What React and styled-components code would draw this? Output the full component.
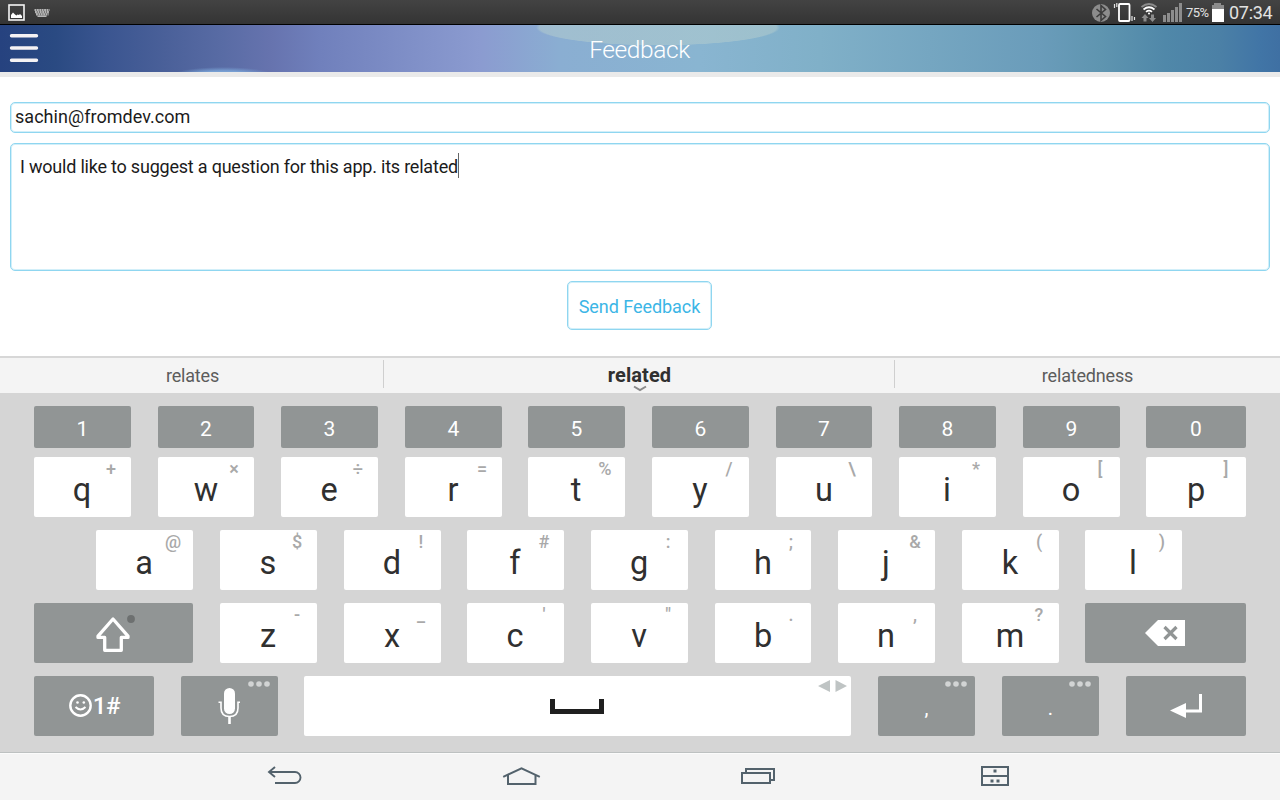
import React from "react";
import styled, { createGlobalStyle, css } from "styled-components";

const GlobalStyle = createGlobalStyle`
  * { box-sizing: border-box; }
  body { margin: 0; background: #fff; font-family: Roboto, "Liberation Sans", sans-serif; overflow: hidden; }
`;

const Screen = styled.div`
  width: 1280px;
  height: 800px;
  display: flex;
  flex-direction: column;
  background: #fff;
`;

const StatusBar = styled.div`
  height: 25px;
  flex: none;
  display: flex;
  justify-content: space-between;
  background: linear-gradient(#434343, #343434);
  border-bottom: 1px solid #000;
`;

const StatusGroup = styled.div`
  display: flex;
  height: 24px;
`;

const StatusText = styled.span`
  width: ${(p) => p.$width}px;
  margin-left: ${(p) => p.$gap}px;
  font-size: ${(p) => p.$size}px;
  letter-spacing: ${(p) => p.$spacing}px;
  line-height: 26px;
  color: #e2e2e2;
  white-space: nowrap;
`;

const Glyph = styled.svg`
  display: block;
  flex: none;
`;

const Header = styled.header`
  height: 52px;
  flex: none;
  display: grid;
  grid-template-columns: 48px 1fr 48px;
  border-bottom: 5px solid #eaeaea;
  background:
    radial-gradient(ellipse 122px 18px at 658px 2.5px, rgba(182, 206, 206, 0.5) 97%, transparent 100%),
    radial-gradient(ellipse 52px 9px at 223px 51px, rgba(125, 168, 218, 0.85) 55%, transparent 100%),
    linear-gradient(90deg, #26427f 0, #2a4a82 55px, #3a5590 105px, #4a6099 165px, #586ba4 220px, #6673ae 270px,
      #7080bc 320px, #8b9bd0 480px, #8aaed2 560px, #89b5d1 700px, #80b0c8 820px, #6a9cba 1040px, #5f95b0 1100px,
      #5088a9 1165px, #4b80a6 1220px, #4175a6 1260px, #3f70a3 1280px);
  background-clip: padding-box;
`;

const Title = styled.h1`
  margin: 0;
  padding-right: 1px;
  text-align: center;
  font-size: 24.5px;
  font-weight: 300;
  letter-spacing: -0.4px;
  line-height: 49px;
  color: #fff;
`;

const Form = styled.main`
  height: 279px;
  flex: none;
  display: flex;
  flex-direction: column;
  align-items: center;
  gap: 10px;
  padding: 25px 10px 0;
`;

const outlined = css`
  border: 1px solid #8fd6f0;
  border-radius: 5px;
  box-shadow: inset 0 0 0 1px #d2eff9;
  background: #fff;
  font-size: 18px;
  white-space: nowrap;
`;

const EmailField = styled.div`
  ${outlined}
  width: 100%;
  height: 31px;
  padding-left: 4px;
  line-height: 27px;
  letter-spacing: 0.04px;
  color: #1b1b1b;
`;

const MessageField = styled.div`
  ${outlined}
  width: 100%;
  height: 128px;
  padding: 9px 9px;
  display: flex;
  line-height: 28px;
  letter-spacing: -0.21px;
  color: #1b1b1b;
`;

const Caret = styled.span`
  width: 1.5px;
  height: 25px;
  background: #666;
`;

const SendButton = styled.button`
  ${outlined}
  width: 145px;
  height: 49px;
  margin-right: 1px;
  padding: 2px 0 0;
  font-family: inherit;
  letter-spacing: -0.05px;
  color: #3cb6e6;
`;

const Suggestions = styled.div`
  height: 37px;
  flex: none;
  display: grid;
  grid-template-columns: 384px 511px 385px;
  border-top: 2px solid #d7d7d7;
  background: #f4f4f4;
`;

const Suggestion = styled.div`
  height: 28px;
  margin-top: 2px;
  padding-left: ${(p) => (p.$last ? 0 : p.$main ? 1 : 2)}px;
  border-right: ${(p) => (p.$last ? "none" : "1px solid #cfcfcf")};
  text-align: center;
  font-size: ${(p) => (p.$main ? 20 : 18)}px;
  font-weight: ${(p) => (p.$main ? 700 : 400)};
  letter-spacing: ${(p) => (p.$main ? 0.1 : -0.18)}px;
  line-height: ${(p) => (p.$main ? 30 : 31)}px;
  color: ${(p) => (p.$main ? "#303030" : "#5c5c5c")};
  position: relative;
`;

const Chevron = styled(Glyph)`
  position: absolute;
  left: 249px;
  top: 25px;
`;

const Keyboard = styled.div`
  height: 359px;
  flex: none;
  padding: 13px 34px 0;
  display: flex;
  flex-direction: column;
  gap: 13px;
  background: #d5d5d5;
`;

const Row = styled.div`
  display: flex;
  padding-left: ${(p) => p.$indent || 0}px;
  margin-bottom: ${(p) => p.$pull || 0}px;
`;

const KeyCap = styled.div`
  position: relative;
  flex: none;
  width: ${(p) => p.$w}px;
  height: 60px;
  margin-right: ${(p) => p.$gap}px;
  padding-top: ${(p) => p.$drop ?? 5.5}px;
  padding-right: ${(p) => p.$w % 2}px;
  display: flex;
  align-items: center;
  justify-content: center;
  border-radius: 2px;
  background: ${(p) => (p.$dark ? "#919595" : "#fff")};
  color: ${(p) => (p.$dark ? "#fff" : "#303030")};
  font-size: 32.5px;
  line-height: 1;
`;

const NumberKey = styled(KeyCap)`
  height: 42px;
  padding-top: 4px;
  padding-right: 0;
  font-size: 21px;
`;

const PunctuationKey = styled(KeyCap)`
  padding-right: 0;
  font-size: 20px;
`;

const Hint = styled.span`
  position: absolute;
  top: 1px;
  right: 0;
  width: 40px;
  text-align: center;
  font-size: 18px;
  font-weight: 500;
  line-height: 22px;
  color: #a9a9a9;
`;

const CornerGlyph = styled(Glyph)`
  position: absolute;
  top: ${(p) => p.$top}px;
  right: ${(p) => p.$right}px;
`;

const SymbolLabel = styled.span`
  font-size: 24px;
  font-weight: 500;
  margin-left: 1px;
  letter-spacing: -0.4px;
`;

const NavBar = styled.nav`
  height: 48px;
  flex: none;
  display: flex;
  align-items: center;
  padding: 0 0 1px 267px;
  border-top: 1px solid #bdc1c1;
  box-shadow: inset 0 1px #fbfbfb;
  background: #f4f4f4;
`;

const NavIcon = styled(Glyph)`
  margin-right: ${(p) => p.$gap || 0}px;
`;

const pitch = [[97, 27], [96, 27], [97, 27], [97, 26], [97, 27], [97, 27], [96, 27], [97, 27], [97, 26], [100, 0]];
const homePitch = [[97, 27], [97, 27], [97, 26], [97, 27], [97, 27], [96, 27], [97, 27], [97, 26], [97, 0]];

const digits = "1234567890".split("");
const topRow = [["q", "+"], ["w", "×"], ["e", "÷"], ["r", "="], ["t", "%"], ["y", "/"], ["u", "\\"], ["i", "*"], ["o", "["], ["p", "]"]];
const homeRow = [["a", "@"], ["s", "$"], ["d", "!"], ["f", "#"], ["g", ":"], ["h", ";"], ["j", "&"], ["k", "("], ["l", ")"]];
const bottomRow = [["z", "-"], ["x", "_"], ["c", "'"], ["v", "\""], ["b", "."], ["n", ","], ["m", "?"]];

function LetterKeys({ keys, sizes }) {
  return keys.map(([label, hint], i) => (
    <KeyCap key={label} $w={sizes[i][0]} $gap={sizes[i][1]}>
      {label}
      <Hint>{hint}</Hint>
    </KeyCap>
  ));
}

function MoreDots() {
  return (
    <CornerGlyph $top={5} $right={8} width="22" height="6" fill="#d2d4d4">
      <circle cx="3" cy="3" r="2.8" />
      <circle cx="11" cy="3" r="2.8" />
      <circle cx="19" cy="3" r="2.8" />
    </CornerGlyph>
  );
}

function NotificationIcons() {
  return (
    <Glyph width="60" height="24">
      <rect x="9" y="5" width="15" height="15" fill="none" stroke="#f4f4f4" strokeWidth="1.6" />
      <path d="M11 18v-3l2-2.5 2 2 1.500 1 1-1 1.500.5 1-1 2 2v2z" fill="#fff" />
      <path d="M34.500 10h15M35 12.200h14M36 14.400h12.500" stroke="#b4b4b4" strokeWidth="2.200" strokeDasharray="1.900 .5" />
      <path d="M37.500 16.200h9" stroke="#b8b8b8" strokeWidth="1.600" />
    </Glyph>
  );
}

function SystemIcons() {
  return (
    <Glyph width="94" height="24">
      <circle cx="11" cy="13" r="9" fill="#8c8c8c" />
      <path d="M6.500 9l9 7.500-4.500 4V5.500l4.500 4-9 7.500" fill="none" stroke="#3c3c3c" strokeWidth="1.600" />
      <rect x="29" y="4" width="10.500" height="17" rx="1" fill="none" stroke="#fff" strokeWidth="1.800" />
      <path d="M24.500 4v4M26.800 3v4M42 16v5M44.500 17v3" stroke="#e4e4e4" strokeWidth="1.200" />
      <path d="M51.500 7q7.500-6 15 0" fill="none" stroke="#8c8c8c" strokeWidth="1.800" />
      <path d="M53.500 9.500q5.500-4.500 11 0M56 11.800q3-2.400 6 0" fill="none" stroke="#fff" strokeWidth="1.700" />
      <circle cx="59" cy="13.500" r="1" fill="#fff" />
      <path d="M55 14l3.500 4h-2v3.500h-3V18h-2zM61 14.500h3V18h2L62.500 22l-3.500-4h2z" fill="#8c8c8c" />
      <path d="M73 15h3v7h-3zM77 13h3v9h-3zM81 10h3v12h-3zM85 7h3v15h-3zM89 3h3v19h-3z" fill="#8c8c8c" />
    </Glyph>
  );
}

export default function App() {
  return (
    <>
      <GlobalStyle />
      <Screen>
        <StatusBar>
          <NotificationIcons />
          <StatusGroup>
            <SystemIcons />
            <StatusText $width={24} $gap={2} $size={13} $spacing={-0.5}>75%</StatusText>
            <Glyph width="14" height="24">
              <path d="M4 3h7v2h3v4H2V5h2z" fill="#8c8c8c" />
              <path d="M2 9h12v13H2z" fill="#fff" />
            </Glyph>
            <StatusText $width={51} $gap={5} $size={18} $spacing={-0.3}>07:34</StatusText>
          </StatusGroup>
        </StatusBar>

        <Header>
          <Glyph width="48" height="47" stroke="#f5f2f4" strokeWidth="3.400" strokeLinecap="round">
            <path d="M11.500 10.800h25M11.500 23h25M11.500 35.200h25" />
          </Glyph>
          <Title>Feedback</Title>
        </Header>

        <Form>
          <EmailField>sachin@fromdev.com</EmailField>
          <MessageField>
            I would like to suggest a question for this app. its related
            <Caret />
          </MessageField>
          <SendButton>Send Feedback</SendButton>
        </Form>

        <Suggestions>
          <Suggestion>relates</Suggestion>
          <Suggestion $main>
            related
            <Chevron width="14" height="7" fill="none" stroke="#8a8a8a" strokeWidth="2">
              <path d="M1 1.500l6 3.500 6-3.500" />
            </Chevron>
          </Suggestion>
          <Suggestion $last>relatedness</Suggestion>
        </Suggestions>

        <Keyboard>
          <Row $pull={-4}>
            {digits.map((d, i) => (
              <NumberKey key={d} $dark $w={pitch[i][0]} $gap={pitch[i][1]}>{d}</NumberKey>
            ))}
          </Row>
          <Row><LetterKeys keys={topRow} sizes={pitch} /></Row>
          <Row $indent={62}><LetterKeys keys={homeRow} sizes={homePitch} /></Row>
          <Row>
            <KeyCap $dark $w={159} $gap={27} $drop={0}>
              <Glyph width="44" height="44">
                <path d="M22 8L7 25.200v1.200h6.700v12.900h16.600V26.400H37v-1.200z" fill="none" stroke="#fff" strokeWidth="3.300" strokeLinejoin="round" />
                <circle cx="40" cy="8" r="3.900" fill="#6d7070" />
              </Glyph>
            </KeyCap>
            <LetterKeys keys={bottomRow} sizes={homePitch.slice(1)} />
            <KeyCap $dark $w={161} $gap={0} $drop={0}>
              <Glyph width="40" height="26">
                <path d="M0 13L13 0h27v26H13z" fill="#fff" />
                <path d="M19.500 7l12 12M31.500 7l-12 12" stroke="#919595" strokeWidth="3.200" />
              </Glyph>
            </KeyCap>
          </Row>
          <Row>
            <KeyCap $dark $w={120} $gap={27} $drop={0}>
              <Glyph width="24" height="24">
                <circle cx="12.500" cy="11.500" r="10.200" fill="none" stroke="#fff" strokeWidth="2.400" />
                <circle cx="9.500" cy="8.500" r="1.300" fill="#fff" />
                <circle cx="15.800" cy="8.500" r="1.300" fill="#fff" />
                <path d="M7.500 13q5 5 10 0" fill="none" stroke="#fff" strokeWidth="1.900" />
              </Glyph>
              <SymbolLabel>1#</SymbolLabel>
            </KeyCap>
            <KeyCap $dark $w={97} $gap={26} $drop={0}>
              <Glyph width="22" height="36" viewBox="-0.500 0 22 36">
                <rect x="5.500" y="0" width="11" height="26" rx="5.500" fill="#fff" />
                <path d="M0 14.200h2.500V20q0 8.500 8.500 8.500t8.500-8.500v-5.800H22" fill="none" stroke="#fff" strokeWidth="1.600" />
                <path d="M11 28v8" stroke="#fff" strokeWidth="2.600" />
              </Glyph>
              <MoreDots />
            </KeyCap>
            <KeyCap $w={547} $gap={27} $drop={0}>
              <Glyph width="54" height="15">
                <path d="M0 0h5v10h44V0h5v15H0z" fill="#1f1f1f" />
              </Glyph>
              <CornerGlyph $top={4} $right={4} width="29" height="12" fill="#bfc4c4">
                <path d="M0 6L12 0v12zM29 6L17.500 0v12z" />
              </CornerGlyph>
            </KeyCap>
            <PunctuationKey $dark $w={97} $gap={27} $drop={4}>,<MoreDots /></PunctuationKey>
            <PunctuationKey $dark $w={97} $gap={27} $drop={4}>.<MoreDots /></PunctuationKey>
            <KeyCap $dark $w={120} $gap={0} $drop={0}>
              <Glyph width="32" height="24">
                <path d="M0 16.500L16 9v6.500h13V0h3v18.500H16V24z" fill="#fff" />
              </Glyph>
            </KeyCap>
          </Row>
        </Keyboard>

        <NavBar>
          <NavIcon $gap={199} width="36" height="24" fill="none" stroke="#53626c" strokeWidth="1.900">
            <path d="M8 3l-6 5 6 5M2 8h26a5.500 5.500 0 0 1 0 11H8" />
          </NavIcon>
          <NavIcon $gap={199} width="39" height="24" fill="none" stroke="#53626c" strokeWidth="2">
            <path d="M1.200 12.800l18.300-8.500 18.300 8.500M6 11v9h27.500v-9" />
          </NavIcon>
          <NavIcon $gap={202} width="36" height="24" fill="none" stroke="#53626c" strokeWidth="2">
            <path d="M2 9h28v10H2zM6 9V5h28v11h-4" />
          </NavIcon>
          <NavIcon width="32" height="24">
            <path d="M4 3h26v18H4zM4 12h26" fill="none" stroke="#53626c" strokeWidth="2" />
            <path d="M15.500 7h3M12.500 17h3M18.500 17h3" stroke="#53626c" strokeWidth="3" />
          </NavIcon>
        </NavBar>
      </Screen>
    </>
  );
}
